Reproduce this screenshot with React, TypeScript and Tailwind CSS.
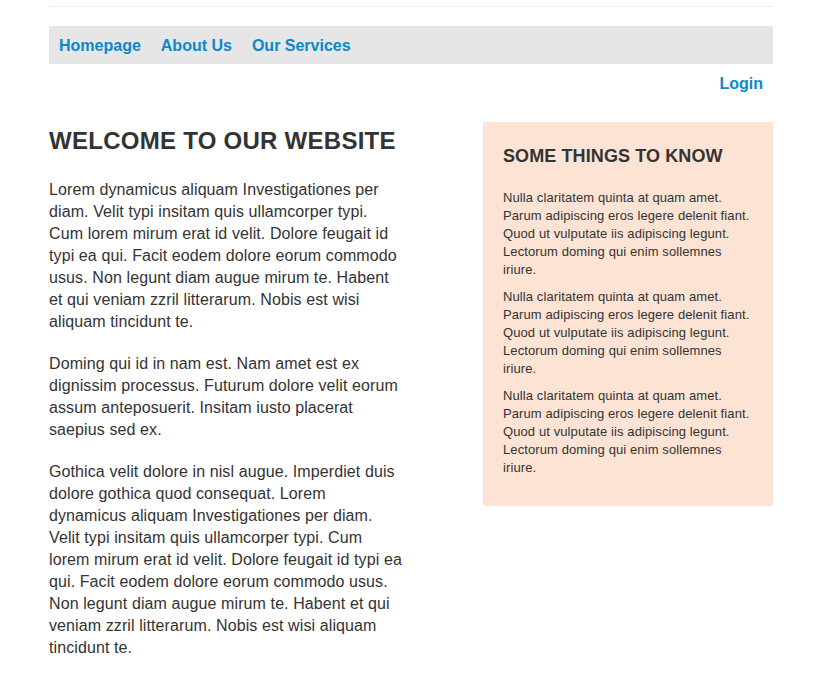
const sideLines = [
  "Nulla claritatem quinta at quam amet.",
  "Parum adipiscing eros legere delenit fiant.",
  "Quod ut vulputate iis adipiscing legunt.",
  "Lectorum doming qui enim sollemnes",
  "iriure.",
];

const paragraphs = [
  [
    "Lorem dynamicus aliquam Investigationes per",
    "diam. Velit typi insitam quis ullamcorper typi.",
    "Cum lorem mirum erat id velit. Dolore feugait id",
    "typi ea qui. Facit eodem dolore eorum commodo",
    "usus. Non legunt diam augue mirum te. Habent",
    "et qui veniam zzril litterarum. Nobis est wisi",
    "aliquam tincidunt te.",
  ],
  [
    "Doming qui id in nam est. Nam amet est ex",
    "dignissim processus. Futurum dolore velit eorum",
    "assum anteposuerit. Insitam iusto placerat",
    "saepius sed ex.",
  ],
  [
    "Gothica velit dolore in nisl augue. Imperdiet duis",
    "dolore gothica quod consequat. Lorem",
    "dynamicus aliquam Investigationes per diam.",
    "Velit typi insitam quis ullamcorper typi. Cum",
    "lorem mirum erat id velit. Dolore feugait id typi ea",
    "qui. Facit eodem dolore eorum commodo usus.",
    "Non legunt diam augue mirum te. Habent et qui",
    "veniam zzril litterarum. Nobis est wisi aliquam",
    "tincidunt te.",
  ],
];

export default function App() {
  return (
    <div className="min-h-screen bg-white font-['Liberation_Sans',Arial,sans-serif] text-[#333]">
      <div className="ml-[49px] w-[724px] pt-[6px]">
        <div className="border-t border-[#eeeeee]" />
        <nav className="mt-[19px] flex h-[38px] items-center gap-5 bg-[#e6e6e6] px-[10px] pt-[2px]">
          <a className="text-base font-bold text-[#0a88cc]">Homepage</a>
          <a className="text-base font-bold text-[#0a88cc]">About Us</a>
          <a className="text-base font-bold text-[#0a88cc]">Our Services</a>
        </nav>
        <div className="mt-[9px] flex justify-end pr-[10px]">
          <a className="text-base font-bold leading-[22px] text-[#0a88cc]">Login</a>
        </div>
        <div className="mt-[27px] flex">
          <main className="w-[380px]">
            <h1 className="mt-[4px] whitespace-nowrap text-[24px] font-bold leading-[30px] tracking-[0.27px]">
              WELCOME TO OUR WEBSITE
            </h1>
            {paragraphs.map((lines, i) => (
              <p
                key={i}
                className={`${i === 0 ? "mt-[23px]" : "mt-5"} whitespace-nowrap text-base leading-[22px] tracking-[0.1px]`}
              >
                {lines.map((l, j) => (
                  <span key={j} className="block">
                    {l}
                  </span>
                ))}
              </p>
            ))}
          </main>
          <aside className="ml-auto w-[290px] self-start bg-[#fde3d3] px-5 pb-[29px] pt-[23px]">
            <h2 className="text-lg font-bold leading-[22px] tracking-[0.1px]">SOME THINGS TO KNOW</h2>
            {[0, 1, 2].map((k) => (
              <p
                key={k}
                className={`${k === 0 ? "mt-[22px]" : "mt-[9px]"} whitespace-nowrap text-[13px] leading-[18px] tracking-[0.1px]`}
              >
                {sideLines.map((l, j) => (
                  <span key={j} className="block">
                    {l}
                  </span>
                ))}
              </p>
            ))}
          </aside>
        </div>
      </div>
    </div>
  );
}
